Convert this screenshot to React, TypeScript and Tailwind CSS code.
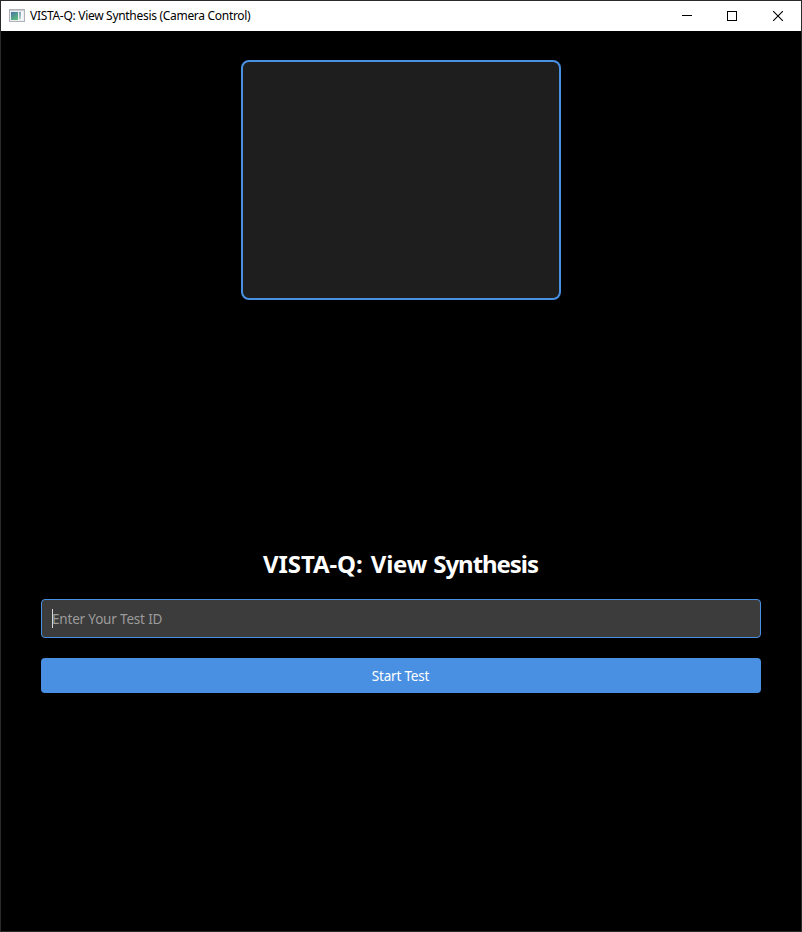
function AppIcon() {
  return (
    <svg width="16" height="14" viewBox="0 0 16 14" shapeRendering="crispEdges" className="ml-2 shrink-0">
      <defs>
        <linearGradient id="pane" x1="0" y1="0" x2="0.6" y2="1">
          <stop offset="0" stopColor="#4a72a8" />
          <stop offset="1" stopColor="#5cba7c" />
        </linearGradient>
        <linearGradient id="strip" x1="0" y1="0" x2="0" y2="1">
          <stop offset="0" stopColor="#7aa3bd" />
          <stop offset="1" stopColor="#b5d6c6" />
        </linearGradient>
      </defs>
      <rect width="16" height="13" fill="#b0b4b8" />
      <rect x="1" y="1" width="14" height="11" fill="#eceeef" />
      <rect x="1" y="1" width="14" height="1" fill="#c9cdd1" />
      <rect x="2" y="3" width="7" height="8" fill="url(#pane)" />
      <rect x="10" y="3" width="2" height="7" fill="url(#strip)" />
      <rect x="12" y="3" width="2" height="8" fill="#f7f8f9" />
    </svg>
  );
}

function TitleBar() {
  return (
    <header className="flex h-[30px] shrink-0 items-center bg-white text-black">
      <AppIcon />
      <h1 className="ml-[5px] whitespace-nowrap text-[12px] leading-[30px] tracking-[-0.3px]">
        VISTA-Q: View Synthesis (Camera Control)
      </h1>
      <div className="ml-auto flex h-full">
        <button aria-label="Minimize" className="flex w-[45px] items-center justify-center">
          <svg width="11" height="10" viewBox="0 0 11 10" shapeRendering="crispEdges">
            <path d="M1 4h10v1H1z" fill="#000" />
          </svg>
        </button>
        <button aria-label="Maximize" className="flex w-[46px] items-center justify-center">
          <svg width="10" height="10" viewBox="0 0 10 10" shapeRendering="crispEdges">
            <rect x="0.5" y="0.5" width="9" height="9" fill="none" stroke="#000" />
          </svg>
        </button>
        <button aria-label="Close" className="flex w-[46px] items-center justify-center">
          <svg width="10" height="10" viewBox="0 0 10 10">
            <path d="M0 0L10 10M10 0L0 10" stroke="#000" strokeWidth="1.1" />
          </svg>
        </button>
      </div>
    </header>
  );
}

export default function App() {
  return (
    <div className="flex h-[932px] w-[802px] flex-col border border-[#2a2a2b] bg-black font-['Noto_Sans','Open_Sans',sans-serif]">
      <TitleBar />
      <main className="flex flex-1 flex-col px-10 pt-[29px]">
        <div className="h-60 w-80 shrink-0 self-center rounded-lg border-2 border-[#4a90e2] bg-[#1e1e1e]" />
        <h2 className="mt-[248px] h-8 whitespace-nowrap pr-px text-center text-[24px] font-bold leading-8 tracking-[-0.1px] text-white">
          VISTA-Q: <span className="ml-0.5 tracking-[-0.2px]">View</span>{" "}
          <span className="tracking-[-1.05px]">Synthesis</span>
        </h2>
        <div className="mt-[19px] flex h-[39px] shrink-0 items-center rounded-[4px] border border-[#4a90e2] bg-[#3c3c3c] pl-2.5">
          <span className="h-[19px] w-px bg-[#d8d8d8]" />
          <span className="-ml-px whitespace-nowrap text-[13.5px] leading-5 tracking-[-0.18px] text-[#9b9b9b]">
            Enter Your Test ID
          </span>
        </div>
        <button className="mt-5 h-[35px] shrink-0 rounded-[4px] bg-[#4a90e2] pr-px pt-0.5 text-center text-[13.5px] leading-[33px] tracking-[-0.2px] text-white">
          Start Test
        </button>
      </main>
    </div>
  );
}
